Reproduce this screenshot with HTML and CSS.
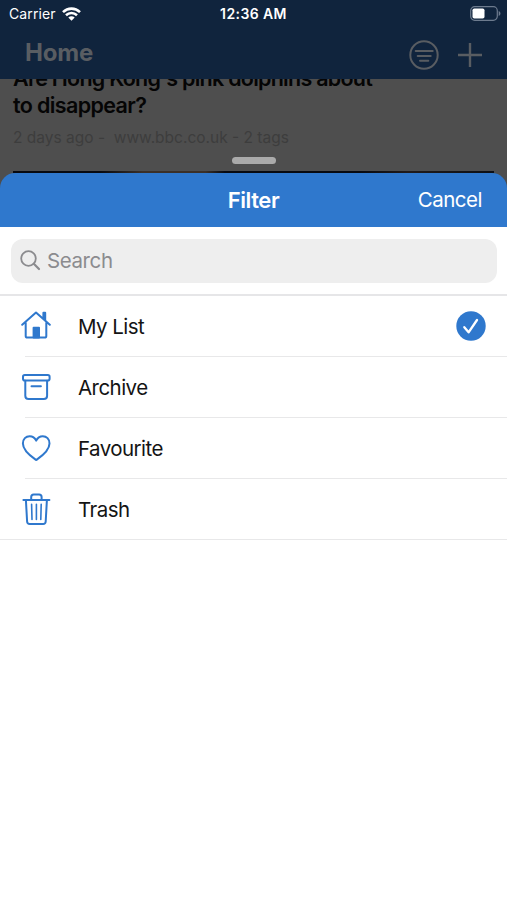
FILE: index.html
```html
<!DOCTYPE html>
<html lang="en">
<head>
<meta charset="utf-8">
<title>Filter</title>
<link rel="stylesheet" href="styles.css">
</head>
<body>
<div class="phone">
  <header class="top">
    <div class="status">
      <div class="carrier"><span>Carrier</span>
        <svg width="19" height="14" viewBox="0 0 19 14" fill="none" stroke="#fff" stroke-width="2.6"><path d="M1 5.1C5.8.5 13.2.5 18 5.1M4 8.2c3.1-2.9 7.9-2.9 11 0"/><path d="M6.3 10.5c1.8-1.7 4.6-1.7 6.4 0l-3.2 3.3z" fill="#fff" stroke="none"/></svg>
      </div>
      <time class="clock">12:36 AM</time>
      <svg class="battery" width="31" height="15" viewBox="0 0 31 15"><rect x=".7" y=".7" width="26.6" height="13.6" rx="4" fill="none" stroke="#6d7b8e" stroke-width="1.2"/><rect x="2.5" y="2.5" width="12" height="10" rx="1.8" fill="#fff"/><path d="M28.7 5v5c2.3-1 2.3-4 0-5" fill="#6d7b8e"/></svg>
    </div>
    <div class="nav">
      <h1>Home</h1>
      <div class="actions">
        <svg width="30" height="30" viewBox="0 0 30 30" fill="none" stroke="#595d62" stroke-width="2"><circle cx="15" cy="15" r="13.7"/><path d="M6.7 11h17M8.7 16h13M11 20.8h8.3" stroke-linecap="round"/></svg>
        <svg width="24" height="24" viewBox="0 0 24 24" stroke="#595d62" stroke-width="2.4"><path d="M12 0v24M0 12h24"/></svg>
      </div>
    </div>
  </header>
  <section class="article">
    <h2><span class="line-one">Are Hong Kong's pink dolphins about</span><br><span class="line-two">to disappear?</span></h2>
    <p>2 days ago -&nbsp; www.bbc.co.uk - 2 tags</p>
    <div class="grabber"></div>
    <div class="photo"></div>
  </section>
  <main class="sheet">
    <header class="sheet-head"><h3>Filter</h3><span class="cancel">Cancel</span></header>
    <div class="search-area"><div class="search">
      <svg width="21" height="21" viewBox="0 0 21 21" fill="none" stroke="#8b8b8e" stroke-width="1.8"><circle cx="8.5" cy="8.5" r="7.3"/><path d="M13.8 13.8l5.2 5.2" stroke-width="2.2" stroke-linecap="round"/></svg>
      <span>Search</span></div></div>
    <ul class="list">
      <li><svg class="icon" viewBox="0 0 30 32"><path d="M1.2 15.8L15 3.5l13.8 12.3M22.4 9.3V3.7h1.8v7.6M4.7 13.5v13.4c0 1 .7 1.7 1.7 1.7h17.2c1 0 1.7-.7 1.7-1.7V13.5"/><path d="M12.6 28.5v-9.7h5.4v9.7z" fill="#2f78cd"/></svg><span>My List</span>
        <svg class="check" width="30" height="30" viewBox="0 0 30 30"><circle cx="15" cy="15" r="14.7" fill="#2f78cd"/><path d="M8.3 16.2l4.3 5.1L21 9" fill="none" stroke="#fff" stroke-width="2.3" stroke-linecap="round" stroke-linejoin="round"/></svg></li>
      <li><svg class="icon" viewBox="0 0 30 32"><rect x="2" y="4" width="26.6" height="5.5" rx="1.8"/><path d="M4.3 9.7v15c0 2.1 1.3 3.3 3.3 3.3h15.2c2 0 3.3-1.2 3.3-3.3v-15M10.5 15.3h9.4"/></svg><span>Archive</span></li>
      <li><svg class="icon" viewBox="0 0 30 32"><path d="M15.2 28C12.2 25.8 1.9 19.2 1.9 11.4 1.9 7 4.9 4.2 8.6 4.2c3.1 0 5.4 1.8 6.6 4.4 1.2-2.6 3.5-4.4 6.6-4.4 3.7 0 6.7 2.8 6.7 7.2C28.5 19.2 18.2 25.8 15.2 28z"/></svg><span>Favourite</span></li>
      <li><svg class="icon" viewBox="0 0 30 32"><path d="M2.4 7h26M10.2 6.5V4c0-1.7.9-2.5 2.5-2.5h5.4c1.6 0 2.5.8 2.5 2.5v2.5M4.9 7l1.2 21.5c.1 1.7 1 2.5 2.6 2.5h13.4c1.6 0 2.5-.8 2.6-2.5L25.9 7"/><path class="slats" d="M10.6 11.3l.4 15.2M15.4 11.3v15.2M20.2 11.3l-.4 15.2"/></svg><span>Trash</span></li>
    </ul>
  </main>
</div>
</body>
</html>
```

FILE: styles.css
```css
* { box-sizing: border-box; }
body { margin: 0; font-family: Inter, "Liberation Sans", sans-serif; }
h1, h2, h3, p, ul { margin: 0; padding: 0; }
svg { display: block; flex: none; }
.phone { width: 507px; height: 900px; overflow: hidden; display: flex; flex-direction: column; background: #4e4e4e; }
.top { height: 79px; flex: none; background: #10243d; }
.status { height: 28px; display: grid; grid-template-columns: 1fr auto 1fr; align-items: center; padding: 0 7px 1px 9px; color: #fff; font-size: 14px; }
.carrier { display: flex; align-items: center; gap: 6px; }
.carrier span { letter-spacing: .1px; }
.clock { font-weight: 600; letter-spacing: .4px; margin-right: 2px; }
.battery { justify-self: end; margin-right: -1px; }
.nav { height: 51px; padding: 0 25px; display: flex; justify-content: space-between; align-items: center; color: #595d62; }
.nav h1 { font-size: 24px; line-height: 30px; letter-spacing: -.2px; margin-top: -2px; }
.actions { display: flex; align-items: center; gap: 19px; padding-top: 2px; }
.article { height: 94px; flex: none; padding: 0 13px; overflow: hidden; display: flex; flex-direction: column; }
.article h2 { margin-top: -14px; font-size: 21.5px; font-weight: 600; line-height: 27px; color: #050505; white-space: nowrap; }
.line-one { letter-spacing: -.75px; }
.line-two { letter-spacing: -.63px; }
.article p { margin-top: 8px; font-size: 15.5px; line-height: 22px; color: #3d3d3d; letter-spacing: 0; white-space: nowrap; }
.grabber { width: 44px; height: 7px; margin: 8px auto 7px; border-radius: 4px; background: #aaa; flex: none; }
.photo { height: 2px; flex: none; background: linear-gradient(90deg, #080a10 0 18%, #3b3028 27% 40%, #080a10 44% 72%, #211b1b 82%, #0d1015); }
.sheet { flex: 1; background: linear-gradient(#4e4e4e 20px, #fff 20px); }
.sheet-head { height: 54px; border-radius: 15px 15px 0 0; background: #2f78cd; color: #fff; display: grid; grid-template-columns: 1fr auto 1fr; align-items: center; padding: 0 25px 1px; }
.sheet-head h3 { grid-column: 2; font-size: 22px; font-weight: 600; letter-spacing: -.45px; }
.cancel { justify-self: end; font-size: 20.5px; letter-spacing: -.5px; }
.search-area { height: 69px; padding: 12px 10px 0 11px; border-bottom: 2px solid #e6e6e8; }
.search { height: 44px; border-radius: 12px; background: #eee; color: #8b8b8e; display: flex; align-items: center; padding: 0 0 1px 9px; gap: 6px; font-size: 20.5px; letter-spacing: -.4px; }
.list { list-style: none; }
.list li { height: 61px; display: flex; align-items: center; padding: 0 21px; font-size: 20.5px; letter-spacing: -.55px; color: #141414; background: linear-gradient(#e8e8e9, #e8e8e9) 25px 100% / 100% 1px no-repeat; }
.list li:first-child { padding-bottom: 1px; }
.list li:last-child { background-position-x: 0; }
.list span { flex: 1; }
.icon { width: 30px; height: 32px; margin: -2px 27px 0 0; fill: none; stroke: #2f78cd; stroke-width: 2; stroke-linecap: round; stroke-linejoin: round; }
.icon .slats { stroke-width: 1.6; }
```
